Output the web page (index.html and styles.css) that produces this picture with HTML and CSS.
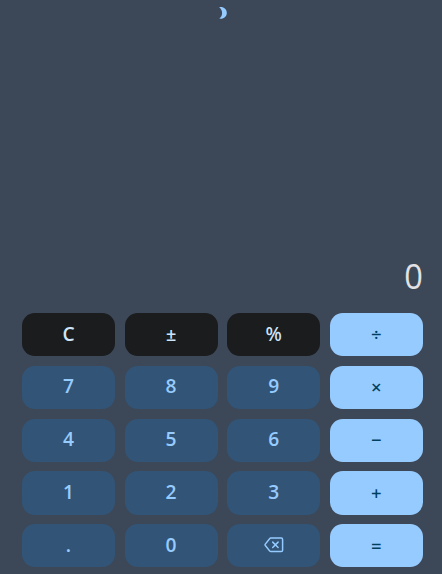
FILE: index.html
```html
<!DOCTYPE html>
<html lang="en">
<head>
<meta charset="utf-8">
<title>Calculator</title>
<link rel="stylesheet" href="styles.css">
</head>
<body>
<main class="calculator">
  <button class="theme" aria-label="Toggle theme"><svg width="16" height="16" viewBox="0 0 16 16"><path d="M5.2 2.2C9.4 1.4 12.8 4.2 12.8 8S9.4 14.4 5.2 13.6C9 11.3 9.2 5 5.2 2.2Z" fill="currentColor"/></svg></button>
  <output class="display">0</output>
  <div class="keys">
    <button class="key function">C</button>
    <button class="key function sign">±</button>
    <button class="key function percent">%</button>
    <button class="key operator divide">÷</button>
    <button class="key">7</button>
    <button class="key">8</button>
    <button class="key">9</button>
    <button class="key operator">×</button>
    <button class="key">4</button>
    <button class="key">5</button>
    <button class="key">6</button>
    <button class="key operator">−</button>
    <button class="key">1</button>
    <button class="key">2</button>
    <button class="key">3</button>
    <button class="key operator">+</button>
    <button class="key">.</button>
    <button class="key">0</button>
    <button class="key delete" aria-label="Backspace"><svg width="20" height="16" viewBox="0 0 20 16" fill="none" stroke="currentColor" stroke-width="1.5" stroke-linecap="round" stroke-linejoin="round"><path d="M6.8 1H17.2Q18.6 1 18.6 2.4V13.2Q18.6 14.6 17.2 14.6H6.8Q6.2 14.6 5.8 14.1L1.3 8.5Q.8 7.8 1.3 7.1L5.8 1.5Q6.2 1 6.8 1Z"/><path d="M8.7 5.1 14.1 10.5M14.1 5.1 8.7 10.5"/></svg></button>
    <button class="key operator">=</button>
  </div>
</main>
</body>
</html>
```
FILE: styles.css
```css
* { box-sizing: border-box; }
body {
  margin: 0;
  background: #3c4858;
  font-family: "Open Sans", "Noto Sans", sans-serif;
  overflow: hidden;
}
.calculator {
  height: 574px;
  padding: 5px 19.2px 6.6px 22px;
  display: flex;
  flex-direction: column;
}
button {
  border: 0;
  padding: 0;
  font-family: inherit;
}
.theme {
  align-self: center;
  display: flex;
  background: none;
  color: #96cbff;
}
.theme svg { display: block; }
.display {
  margin-top: auto;
  margin-bottom: 12px;
  color: #e2e2e5;
  font-size: 35px;
  font-family: "Open Sans", sans-serif;
  font-weight: 400;
  line-height: 50px;
  text-align: right;
  transform: scaleX(.93);
  transform-origin: right;
}
.keys {
  display: grid;
  grid-template-columns: repeat(4, 1fr);
  grid-auto-rows: 43.2px;
  gap: 9.6px;
}
.key {
  display: flex;
  align-items: center;
  justify-content: center;
  padding-bottom: 2px;
  border-radius: 12.8px;
  background: #325476;
  color: #96cbff;
  font-size: 19.2px;
  font-weight: 600;
  line-height: 26px;
}
.function {
  background: #1a1c1e;
  color: #d0e4f8;
}
.percent {
  font-family: "Noto Sans", sans-serif;
  font-weight: 500;
}
.sign { font-size: 18px; }
.delete {
  padding-bottom: 1px;
  padding-left: 1px;
}
.operator {
  padding-bottom: 0;
  background: #96cbff;
  color: #00405f;
  font-family: "Noto Sans", sans-serif;
  font-size: 18.5px;
  font-weight: 500;
}
.divide { padding-bottom: 2px; }
```
